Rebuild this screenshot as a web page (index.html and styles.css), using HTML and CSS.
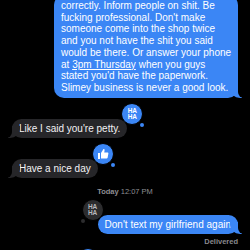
FILE: index.html
```html
<!DOCTYPE html>
<html lang="en">
<head>
  <title>Messages</title>
  <link rel="stylesheet" href="styles.css">
</head>
<body>
  <div class="chat">
    <div class="row sent first">
      <div class="bubble blue">
        correctly. Inform people on shit. Be<br>
        fucking professional. Don't make<br>
        someone come into the shop twice<br>
        and you not have the shit you said<br>
        would be there. Or answer your phone<br>
        at <span class="link">3pm Thursday</span> when you guys<br>
        stated you'd have the paperwork.<br>
        Slimey business is never a good look.
      </div>
    </div>

    <div class="row received gap">
      <div class="bubble gray">
        Like I said you're petty.
        <div class="tapback blue-tap right">
          <span class="haha">HA<br>HA</span>
          <i class="dot"></i>
        </div>
      </div>
    </div>

    <div class="row received gap">
      <div class="bubble gray">
        Have a nice day
        <div class="tapback blue-tap right">
          <svg width="12" height="12" viewBox="0 0 24 24">
            <path fill="#fff" d="M2 10h4v12H2zM8 21V10l5-8c1.5 0 2.5 1 2.2 2.6L14.5 9H21c1.2 0 2 1 1.8 2.2l-1.6 8.2c-.2 1-1 1.6-2 1.6z"/>
          </svg>
          <i class="dot"></i>
        </div>
      </div>
    </div>

    <div class="stamp"><b>Today</b> 12:07 PM</div>

    <div class="row sent">
      <div class="bubble blue">
        Don't text my girlfriend again
        <div class="tapback gray-tap left">
          <span class="haha">HA<br>HA</span>
          <i class="dot"></i>
        </div>
      </div>
    </div>

    <div class="status">Delivered</div>

    <div class="row next">
      <div class="tapback blue-tap stub"></div>
    </div>
  </div>
</body>
</html>
```

FILE: styles.css
```css
* {
  margin: 0;
  padding: 0;
  box-sizing: border-box;
}
body {
  background-color: #000;
  font-family: 'Liberation Sans', Arial, sans-serif;
  width: 250px;
  height: 250px;
  overflow: hidden;
}
.chat {
  display: flex;
  flex-direction: column;
}
.row {
  display: flex;
}
.row.sent {
  justify-content: flex-end;
  padding-right: 12px;
}
.row.received {
  justify-content: flex-start;
  padding-left: 12px;
}
.row.first {
  margin-top: -5px;
}
.row.gap {
  margin-top: 21px;
}
.bubble {
  position: relative;
  font-size: 10px;
  line-height: 13px;
  padding: 3px 7px;
  border-radius: 10px;
  white-space: nowrap;
  color: #fff;
}
.bubble.blue {
  background-color: #3b86f5;
}
.row.first .bubble {
  line-height: 11.7px;
  padding: 5px 7px 4px;
  width: 184px;
}
.bubble.gray {
  background-color: #262629;
  color: #f2f2f4;
}
.bubble::before,
.bubble::after {
  content: "";
  position: absolute;
  bottom: 0;
  height: 12px;
}
.bubble.blue::before {
  right: -4px;
  width: 12px;
  background-color: #3b86f5;
  border-bottom-left-radius: 10px 9px;
}
.bubble.blue::after {
  right: -7px;
  width: 7px;
  background-color: #000;
  border-bottom-left-radius: 6px;
}
.bubble.gray::before {
  left: -4px;
  width: 12px;
  background-color: #262629;
  border-bottom-right-radius: 10px 9px;
}
.bubble.gray::after {
  left: -7px;
  width: 7px;
  background-color: #000;
  border-bottom-right-radius: 6px;
}
.link {
  text-decoration: underline;
}
.tapback {
  position: absolute;
  top: -16px;
  width: 22px;
  height: 22px;
  border-radius: 50%;
  border: 1px solid #000;
  display: flex;
  align-items: center;
  justify-content: center;
  z-index: 2;
}
.tapback.right {
  right: -16px;
}
.tapback.left {
  left: -16px;
}
.blue-tap {
  background-color: #3b86f5;
}
.gray-tap {
  background-color: #2c2c2e;
}
.haha {
  font-size: 6.5px;
  line-height: 6px;
  font-weight: bold;
  text-align: center;
  color: #fff;
  letter-spacing: -0.2px;
}
.gray-tap .haha {
  color: #b9b9bd;
}
.dot {
  position: absolute;
  width: 4px;
  height: 4px;
  border-radius: 50%;
}
.blue-tap .dot {
  right: -2px;
  bottom: -3px;
  background-color: #3b86f5;
}
.gray-tap .dot {
  left: -2px;
  bottom: -3px;
  background-color: #2c2c2e;
}
.stamp {
  margin-top: 9px;
  text-align: center;
  font-size: 7.5px;
  line-height: 9px;
  color: #8e8e93;
}
.stamp b {
  font-weight: bold;
}
.row.sent + .status {
  margin-top: 3px;
}
.row.sent:not(.first) {
  margin-top: 19px;
}
.status {
  align-self: flex-end;
  padding-right: 12px;
  font-size: 7.5px;
  line-height: 9px;
  font-weight: bold;
  color: #8a8a8e;
}
.row.next {
  position: relative;
  height: 20px;
  margin-top: 2px;
}
.tapback.stub {
  top: 0;
  left: 77px;
}
```
